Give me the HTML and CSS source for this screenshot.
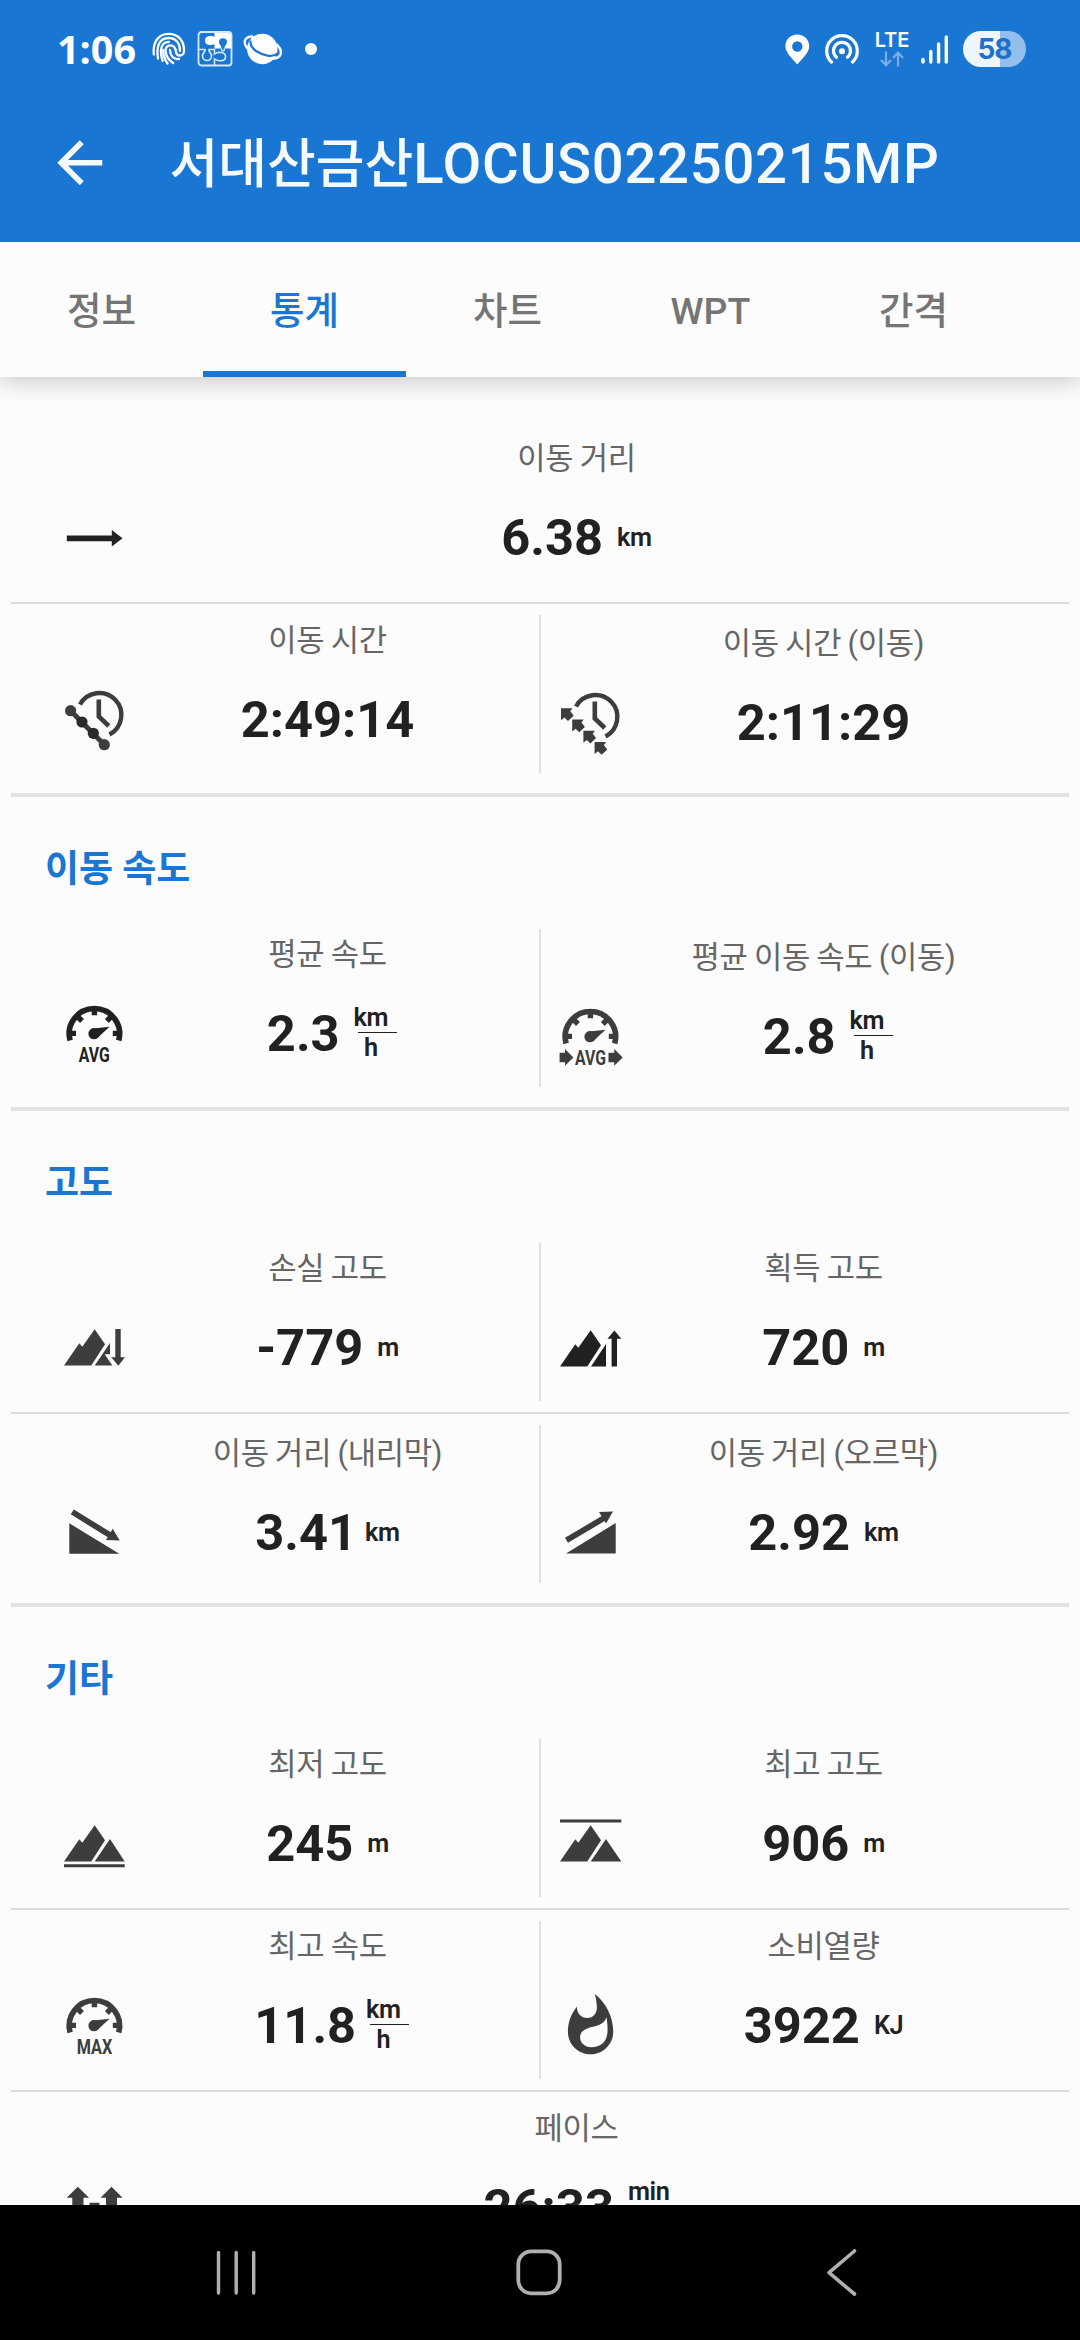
FILE: index.html
```html
<!DOCTYPE html>
<html lang="ko">
<head>
    <meta charset="UTF-8">
    <meta name="viewport" content="width=device-width, initial-scale=1.0">
    <title>서대산금산LOCUS02250215MP</title>
    <link rel="stylesheet" href="styles.css">
</head>
<body>
    <!-- shared icon shapes -->
    <svg class="defs" width="0" height="0">
        <defs>
            <g id="gauge">
                <path d="M10.1 40.4A25.2 25.2 0 1 1 58.7 40.4" fill="none" stroke="currentColor" stroke-width="5.6"/>
                <path d="M34.4 8v7.2M8 33.4h8M52.8 33.4h8M16.5 15.5l5.5 5.5M52.3 15.5l-5.5 5.5" fill="none" stroke="currentColor" stroke-width="5.4"/>
                <circle cx="34" cy="33.7" r="5.6"/>
                <path d="M31.5 28.7L49.5 26.8L37.5 38Z"/>
            </g>
            <g id="clock">
                <path d="M20 18.5A22 22 0 1 1 49.5 48.5" fill="none" stroke="currentColor" stroke-width="4.4"/>
                <path d="M38.8 13.5V30.5L48.8 40" fill="none" stroke="currentColor" stroke-width="4.6"/>
            </g>
            <path id="peak" d="M4 51.4L19.3 29.3L22.3 32.7L34.7 15.2L45 30.3L31.3 51.4Z"/>
            <path id="step" d="M0 0H11.5L9.3 3L12.7 7.4L7 12.7L3.4 9.2L0 12Z"/>
        </defs>
    </svg>

    <header class="app-header">
        <div class="status-bar">
            <span class="clock">1:06</span>
            <svg class="st-finger" viewBox="0 0 34 34" width="34" height="34" fill="none" stroke="#fff" stroke-width="2.3" stroke-linecap="round">
                <path d="M1.800 22.500C.5 10 6.500 1.800 16.700 1.800C27 1.800 32.500 9.500 32 19.500C31.500 24.500 24.800 25 24 20C23.500 15.500 22 13.400 18.500 13.400C14.500 13.400 12.600 17 14 21.500C15.200 26 18 29 21.200 31"/>
                <path d="M6 26.500C4 14 7.500 6 16.700 6C24.500 6 28.200 12 28 19"/>
                <path d="M10.600 28.800C7 17.500 9.500 9.800 17 9.800"/>
                <path d="M15.500 31.500C12.500 27 11 22.500 11.200 18"/>
                <path d="M18 18C18.300 24 21.500 27.500 27 27"/>
            </svg>
            <svg class="st-puzzle" viewBox="0 0 36 36" width="36" height="36">
                <rect x="1.500" y="1" width="33" height="33.500" rx="3" fill="none" stroke="#d7e8f9" stroke-width="1.800"/>
                <path d="M17.500 2H32q2 0 2 2V17.500H27.500C27 15 30 14 30 10.500C30 6 22 6 22 10.500C22 14 25 15 24.500 17.500H17.500V13C15 14.500 8 15 8 9.500C8 4 15 4.500 17.500 6Z" fill="#fff"/>
                <path d="M2 18.500H8C9 21 5.500 21 5.500 25C5.500 31 14.500 31 14.500 25C14.500 21 11 21 12 18.500H17.500V23C20 21 28.500 20 28.500 25.500C28.500 31.500 20 30 17.500 28V34" fill="none" stroke="#d7e8f9" stroke-width="1.600"/>
                <path d="M24.500 17.500C24 21 27.500 21 27.500 17.500" fill="none" stroke="#d7e8f9" stroke-width="1.400"/>
            </svg>
            <svg class="st-planet" viewBox="0 0 40 32" width="40" height="32">
                <circle cx="19.300" cy="16" r="15.200" fill="#fff"/>
                <path d="M7.500 7.500C7 12 9 15 13 18C20 22.500 29.500 25 34.500 20.500" fill="none" stroke="#1976d2" stroke-width="2.200"/>
                <path d="M10 3.500C4 3 .8 6.500 2 11C3.500 16 9.500 20.500 17 23.500C26 27 35.500 26.500 37.500 21.500C38.700 18 36.500 14 33 11" fill="none" stroke="#fff" stroke-width="2.400"/>
            </svg>
            <span class="st-dot"></span>
            <span class="spacer"></span>
            <svg class="st-pin" viewBox="0 0 25 31" width="25" height="31">
                <path d="M12.300.5C5.500.5.400 5.500.400 12.200C.400 18 5 22 12.300 30.500C19.600 22 24.200 18 24.200 12.200C24.200 5.500 19 .5 12.300.5ZM12.300 7.300A5.200 5.200 0 1 1 12.300 17.700A5.200 5.200 0 1 1 12.300 7.300Z" fill="#fff" fill-rule="evenodd"/>
            </svg>
            <svg class="st-hotspot" viewBox="0 0 34 32" width="34" height="32" fill="none" stroke="#fff" stroke-width="3.200" stroke-linecap="round">
                <path d="M6.500 29A15.300 15.300 0 1 1 27.500 29"/>
                <path d="M11.500 24.300A8.500 8.500 0 1 1 22.500 24.300"/>
                <circle cx="17" cy="18.300" r="3" fill="#fff" stroke="none"/>
            </svg>
            <div class="lte">
                <span>LTE</span>
                <svg viewBox="0 0 24 16" width="24" height="16" fill="none" stroke="#78ade6" stroke-width="2.200">
                    <path d="M6 .5V14M1 9L6 14.300L11 9M18 15.500V2M13 7L18 1.700L23 7"/>
                </svg>
            </div>
            <svg class="st-signal" viewBox="0 0 28 31" width="28" height="31" stroke="#fff" stroke-width="3.400" stroke-linecap="round">
                <path d="M2 25.500V28M9.800 17.500V28M17.600 10V28M25.300 3V28"/>
            </svg>
            <div class="battery">58</div>
        </div>
        <div class="title-bar">
            <svg class="back" viewBox="0 0 24 24" width="67.500" height="67.500">
                <path d="M20 11H7.830l5.590-5.590L12 4l-8 8 8 8 1.410-1.410L7.830 13H20v-2z" fill="#f5faff"/>
            </svg>
            <h1>서대산금산<span>LOCUS02250215MP</span></h1>
        </div>
    </header>

    <nav class="tabs">
        <div class="tab">정보</div>
        <div class="tab active">통계</div>
        <div class="tab">차트</div>
        <div class="tab">WPT</div>
        <div class="tab">간격</div>
    </nav>

    <main class="content">
        <section class="section first">
            <div class="row">
                <div class="cell full">
                    <svg class="icon dark" viewBox="0 0 68 68"><path d="M6.800 31.500H51.800V26L62.500 34.300L51.800 42.600V37.200H6.800Z"/></svg>
                    <div class="data">
                        <div class="label">이동 거리</div>
                        <div class="value">6.38<span class="unit">km</span></div>
                    </div>
                </div>
            </div>
            <div class="row">
                <div class="cell">
                    <svg class="icon" viewBox="0 0 68 68">
                        <use href="#clock"/>
                        <path d="M10.600 24.700L44.300 58.700" stroke="currentColor" stroke-width="5"/>
                        <circle cx="10.600" cy="24.700" r="5.600"/><circle cx="22" cy="36" r="5.600" fill="#2a2a2a"/>
                        <circle cx="33.300" cy="47.300" r="5.600" fill="#2a2a2a"/><circle cx="44.300" cy="58.700" r="5.600"/>
                    </svg>
                    <div class="data">
                        <div class="label">이동 시간</div>
                        <div class="value">2:49:14</div>
                    </div>
                </div>
                <div class="cell low">
                    <svg class="icon" viewBox="0 0 68 68">
                        <use href="#clock" y="-1"/>
                        <use href="#step" x="5" y="19.300"/><use href="#step" x="16.200" y="30.500"/>
                        <use href="#step" x="27.400" y="41.700"/><use href="#step" x="38.600" y="53"/>
                    </svg>
                    <div class="data">
                        <div class="label">이동 시간 (이동)</div>
                        <div class="value">2:11:29</div>
                    </div>
                </div>
            </div>
        </section>

        <section class="section">
            <h2>이동 속도</h2>
            <div class="row">
                <div class="cell">
                    <svg class="icon dark" viewBox="0 0 68 68">
                        <use href="#gauge"/>
                        <text x="18.800" y="62" textLength="31" lengthAdjust="spacingAndGlyphs">AVG</text>
                    </svg>
                    <div class="data">
                        <div class="label">평균 속도</div>
                        <div class="value">2.3<span class="fraction"><span>km</span><span>h</span></span></div>
                    </div>
                </div>
                <div class="cell low">
                    <svg class="icon" viewBox="0 0 68 68">
                        <use href="#gauge"/>
                        <text x="19" y="61.500" textLength="31" lengthAdjust="spacingAndGlyphs">AVG</text>
                        <path d="M3.600 49.800H9V46L17.400 54.400L9 62.700V59.200H3.600ZM52.500 49.800H58.200V46L66.700 54.400L58.200 62.700V59.200H52.500Z"/>
                    </svg>
                    <div class="data">
                        <div class="label">평균 이동 속도 (이동)</div>
                        <div class="value">2.8<span class="fraction"><span>km</span><span>h</span></span></div>
                    </div>
                </div>
            </div>
        </section>

        <section class="section">
            <h2>고도</h2>
            <div class="row">
                <div class="cell">
                    <svg class="icon" viewBox="0 0 68 68">
                        <use href="#peak"/>
                        <path d="M34.700 51.400L50 28.900V40.300H44.700L52.300 51.400Z"/>
                        <path d="M55.300 15H60.700V43.300H65L58.300 51.700L51.300 43.300H55.300Z"/>
                    </svg>
                    <div class="data">
                        <div class="label">손실 고도</div>
                        <div class="value">-779<span class="unit">m</span></div>
                    </div>
                </div>
                <div class="cell">
                    <svg class="icon dark" viewBox="0 0 68 68">
                        <use href="#peak" y="1"/>
                        <path d="M35 52.400L50 30V52.400ZM55.600 52.500V24.700H51.500L58.400 16.500L65.300 24.700H61V52.500Z"/>
                    </svg>
                    <div class="data">
                        <div class="label">획득 고도</div>
                        <div class="value">720<span class="unit">m</span></div>
                    </div>
                </div>
            </div>
            <div class="row">
                <div class="cell low">
                    <svg class="icon" viewBox="0 0 68 68">
                        <path d="M9.300 24.300V54.700H59.300ZM52.700 29.700L59.700 41.400L46 41Z"/>
                        <path d="M12.300 12.900L51 36.800" stroke="currentColor" stroke-width="5.800"/>
                    </svg>
                    <div class="data">
                        <div class="label">이동 거리 (내리막)</div>
                        <div class="value">3.41<span class="unit near">km</span></div>
                    </div>
                </div>
                <div class="cell low">
                    <svg class="icon" viewBox="0 0 68 68">
                        <path d="M10 54.500H59.700V24ZM43 13L57 12.500L50 24.500Z"/>
                        <path d="M10.500 41.300L51 17.300" stroke="currentColor" stroke-width="5.800"/>
                    </svg>
                    <div class="data">
                        <div class="label">이동 거리 (오르막)</div>
                        <div class="value">2.92<span class="unit">km</span></div>
                    </div>
                </div>
            </div>
        </section>

        <section class="section">
            <h2>기타</h2>
            <div class="row">
                <div class="cell">
                    <svg class="icon" viewBox="0 0 68 68">
                        <use href="#peak"/>
                        <path d="M34.700 51.400L50 28.900L64.700 51.400ZM4 54.300H64.700V57.300H4Z"/>
                    </svg>
                    <div class="data">
                        <div class="label">최저 고도</div>
                        <div class="value">245<span class="unit">m</span></div>
                    </div>
                </div>
                <div class="cell">
                    <svg class="icon" viewBox="0 0 68 68">
                        <use href="#peak"/>
                        <path d="M34.700 51.400L50 28.900L65.300 51.400ZM4 9.500H65.300V12.500H4Z"/>
                    </svg>
                    <div class="data">
                        <div class="label">최고 고도</div>
                        <div class="value">906<span class="unit">m</span></div>
                    </div>
                </div>
            </div>
            <div class="row">
                <div class="cell">
                    <svg class="icon" viewBox="0 0 68 68">
                        <use href="#gauge"/>
                        <text x="16.800" y="61.700" textLength="35.500" lengthAdjust="spacingAndGlyphs">MAX</text>
                    </svg>
                    <div class="data">
                        <div class="label">최고 속도</div>
                        <div class="value">11.8<span class="fraction near"><span>km</span><span>h</span></span></div>
                    </div>
                </div>
                <div class="cell">
                    <svg class="icon" viewBox="-.2 0 24 24">
                        <path fill-rule="evenodd" d="M13.500.67s.74 2.65.74 4.800c0 2.060-1.350 3.730-3.410 3.730-2.070 0-3.630-1.670-3.630-3.730l.03-.36C5.210 7.510 4 10.620 4 14c0 4.420 3.580 8 8 8s8-3.580 8-8C20 8.610 17.410 3.800 13.500.67zM17.600 8.900C17 11 15 11.800 12.800 12.300C10 12.900 8.300 14 8.300 16C8.300 18 10 19.500 12.200 19.500C15.700 19.500 18 17.500 18 13.500C18 12 17.900 10.500 17.600 8.900Z"/>
                    </svg>
                    <div class="data">
                        <div class="label">소비열량</div>
                        <div class="value">3922<span class="unit">KJ</span></div>
                    </div>
                </div>
            </div>
            <div class="row">
                <div class="cell full">
                    <svg class="icon" viewBox="0 0 68 68">
                        <path d="M17.800 12.700L29 23.700H23.500V50H12.300V23.700H6.700ZM51.500 12.700L62.600 23.700H57V50H46V23.700H40.500ZM29.500 28.700H39.500V34H29.500Z"/>
                    </svg>
                    <div class="data">
                        <div class="label">페이스</div>
                        <div class="value">26:33<span class="fraction"><span>min</span><span>km</span></span></div>
                    </div>
                </div>
            </div>
        </section>
    </main>

    <footer class="nav-bar">
        <svg viewBox="0 0 48 48" width="48" height="48"><path d="M6.500 4.500V45M24.200 4.500V45M41.700 4.500V45" stroke-width="3.400"/></svg>
        <svg viewBox="0 0 48 48" width="48" height="48"><rect x="3.300" y="3.300" width="41.400" height="42" rx="13" stroke-width="3.800"/></svg>
        <svg viewBox="0 0 48 48" width="48" height="48"><path d="M37.500 3L12 24.700L37.500 46" stroke-width="3.600"/></svg>
    </footer>
</body>
</html>
```

FILE: styles.css
```css
* {
    box-sizing: border-box;
}
body {
    margin: 0;
    width: 1080px;
    height: 2340px;
    overflow: hidden;
    display: flex;
    flex-direction: column;
    background-color: #fcfcfc;
    color: #212121;
    font-family: Roboto, "Noto Sans CJK KR", sans-serif;
}
.defs {
    position: absolute;
}
svg {
    display: block;
    flex-shrink: 0;
}

/* header */
.app-header {
    position: relative;
    z-index: 2;
    height: 242px;
    flex-shrink: 0;
    background-color: #1976d2;
    color: #f5faff;
}
.status-bar {
    height: 98px;
    padding: 0 54px 0 57px;
    display: flex;
    align-items: center;
}
.clock {
    width: 95px;
    font-family: "Open Sans", sans-serif;
    font-weight: 700;
    font-size: 39.5px;
    line-height: 96px;
    color: #fff;
}
.st-puzzle {
    margin-left: 11px;
}
.st-planet {
    margin-left: 10px;
}
.st-dot {
    width: 12px;
    height: 12px;
    margin-left: 22px;
    border-radius: 50%;
    background-color: #fff;
}
.spacer {
    flex: 1;
}
.st-hotspot {
    margin-left: 15px;
}
.lte {
    width: 34px;
    margin-left: 16px;
    display: flex;
    flex-direction: column;
    align-items: center;
    gap: 2px;
    font-family: Inter, sans-serif;
    font-size: 20px;
    font-weight: 600;
    line-height: 17px;
    color: #fff;
}
.st-signal {
    margin-left: 12px;
}
.battery {
    width: 63px;
    height: 36px;
    margin-left: 14px;
    border-radius: 18px;
    background: linear-gradient(to right, #eef5fd 58%, #93bfec 58%);
    color: #1f70c8;
    font-family: Inter, sans-serif;
    font-size: 28px;
    font-weight: 700;
    line-height: 36px;
    text-align: center;
    letter-spacing: -1px;
}
.title-bar {
    height: 130px;
    padding-left: 46px;
    display: flex;
    align-items: center;
}
h1 {
    margin: 3px 0 0 56px;
    font-size: 53px;
    font-weight: 500;
    line-height: 80px;
    white-space: nowrap;
}
h1 span {
    font-size: 56.25px;
    letter-spacing: 0.7px;
}

/* tabs */
.tabs {
    position: relative;
    height: 135px;
    flex-shrink: 0;
    display: flex;
    background-color: #fcfcfc;
    box-shadow: 0 5px 22px rgba(0, 0, 0, 0.2);
}
.tab {
    width: 203px;
    height: 135px;
    padding-top: 39px;
    color: #757575;
    font-size: 37.5px;
    font-weight: 500;
    line-height: 60px;
    text-align: center;
}
.tab.active {
    color: #1976d2;
    border-bottom: 6px solid #1976d2;
}

/* statistics */
.content {
    height: 1828px;
    flex-shrink: 0;
    padding: 0 11px;
    overflow: hidden;
}
.section {
    padding-bottom: 9px;
    border-bottom: 4px solid #e2e2e2;
}
.section.first {
    padding-top: 45px;
}
h2 {
    height: 121px;
    margin: 0;
    padding: 43px 0 0 34px;
    color: #1976d2;
    font-size: 37px;
    font-weight: 700;
    line-height: 60px;
}
.row {
    height: 180px;
    padding: 11px 32px 11px 34px;
    display: flex;
}
.row + .row {
    height: 182px;
    border-top: 2px solid #dcdcdc;
}
.cell {
    width: 496px;
    display: flex;
}
.cell:first-child:not(.full) {
    border-right: 2px solid #e0e0e0;
}
.cell.full {
    width: 992px;
}
.icon {
    width: 68px;
    height: 68px;
    margin: 71px 15px 0;
    color: #3d3d3d;
    fill: currentColor;
}
.icon.dark {
    color: #212121;
}
.icon text {
    font-size: 20.4px;
    font-weight: 700;
}
.data {
    width: 369px;
    padding-top: 6px;
}
.full .data {
    width: 867px;
}
.low .icon {
    margin-top: 74px;
}
.low .data {
    padding-top: 9px;
}
.label {
    height: 40px;
    color: #666;
    font-size: 30.8px;
    line-height: 40px;
    text-align: center;
    word-spacing: -1px;
    letter-spacing: -0.3px;
}
.value {
    height: 60px;
    margin-top: 29px;
    display: flex;
    justify-content: center;
    align-items: center;
    font-size: 50.6px;
    font-weight: 700;
    line-height: 60px;
}
.unit {
    margin-left: 14px;
    font-size: 25.3px;
    font-weight: 600;
    letter-spacing: -0.4px;
    line-height: 62px;
}
.unit.near {
    margin-left: 8px;
}
.fraction {
    margin: -3px 0 0 14px;
    display: flex;
    flex-direction: column;
    font-size: 25.3px;
    font-weight: 600;
    letter-spacing: -0.4px;
    line-height: 29px;
    text-align: center;
}
.fraction.near {
    margin-left: 10px;
}
/* the bar sticks out to the right of the unit */
.fraction span:first-child::after {
    content: "";
    display: block;
    width: 39px;
    height: 1px;
    margin: 0 -10px 0 4px;
    background-color: #212121;
}

/* system navigation */
.nav-bar {
    height: 135px;
    flex-shrink: 0;
    padding: 43px 215px 0 212px;
    display: flex;
    justify-content: space-between;
    background-color: #000;
}
.nav-bar svg {
    fill: none;
    stroke: #b0b0b0;
    stroke-linecap: round;
    stroke-linejoin: round;
}
```
